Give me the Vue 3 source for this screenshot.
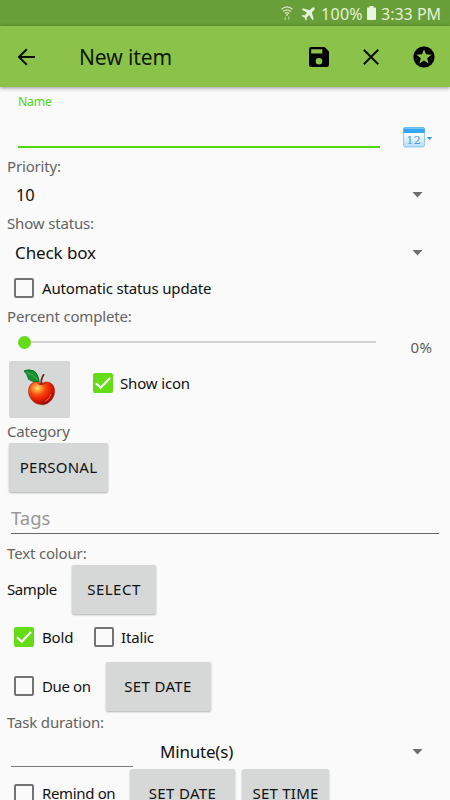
<script setup>
import { ref } from 'vue'

const autoUpdate = ref(false)
const showIcon = ref(true)
const bold = ref(true)
const italic = ref(false)
const dueOn = ref(false)
const remindOn = ref(false)
</script>

<template>
  <div class="screen">
    <div class="status">
      <svg class="wifi" width="12" height="15" viewBox="0 0 12 15" fill="none" stroke="#dcebc9" stroke-width="1.3">
        <path d="M.5 3.3Q6-1.5 11.500 3.300M2.200 5.500Q6 2.200 9.800 5.500M3.900 7.600Q6 5.800 8.100 7.600" />
        <circle cx="6" cy="9" r=".9" fill="#dcebc9" stroke="none" />
        <path d="M4.300 10.500V14M3 12.500L4.300 14M7.700 14V10.500L9 12" stroke-width=".9" opacity=".6" />
      </svg>
      <svg class="plane" width="14" height="14" viewBox="0 0 14 14" fill="#e6f1da">
        <path d="M13.400.6C12.700-.1 11.600.2 10.900.9L8.600 3.200 2 1.300.8 2.500 6 5.800 3.600 8.400 1.500 8.100.5 9.100 3.500 10.500 4.900 13.500 5.900 12.500 5.600 10.400 8.200 8 11.500 13.200 12.700 12 10.800 5.400 13.100 3.100C13.800 2.400 14.100 1.300 13.400.6Z" />
      </svg>
      <span class="pct">100%</span>
      <svg class="battery" width="9" height="14" viewBox="0 0 9 14" fill="#eaf4df">
        <path d="M2.500 0h4v1.500H8.300q.7 0 .7.7V13.300q0 .7-.7.7H.7q-.7 0-.7-.7V2.200q0-.7.7-.7H2.500z" />
      </svg>
      <span class="clock">3:33 PM</span>
    </div>

    <header class="bar">
      <svg class="back" width="18" height="18" viewBox="0 0 18 18" fill="none" stroke="#0b0f06" stroke-width="2">
        <path d="M18 9H2M9.800 1.200L2 9l7.800 7.800" />
      </svg>
      <h1 class="title">New item</h1>
      <svg class="save" width="20" height="20" viewBox="0 0 20 20">
        <path fill="#000" fill-rule="evenodd" d="M2.200 0H15.600L20 4.400V17.800Q20 20 17.800 20H2.200Q0 20 0 17.800V2.200Q0 0 2.200 0ZM2.200 2.300V6.600H13.300V2.300ZM10 11A3.300 3.300 0 1 0 10 17.600A3.300 3.300 0 1 0 10 11Z" />
      </svg>
      <svg class="close" width="16" height="16" viewBox="0 0 16 16" stroke="#0b0f06" stroke-width="2">
        <path d="M.8.8L15.200 15.200M15.200.8L.8 15.200" />
      </svg>
      <svg class="star" width="22" height="22" viewBox="0 0 22 22">
        <circle cx="11" cy="11" r="10.600" />
        <path fill="#8bc34a" d="M11 3.300L12.950 8.350 18.500 8.700 14.200 12.200 15.600 17.500 11 14.500 6.400 17.500 7.800 12.200 3.500 8.700 9.050 8.350Z" />
      </svg>
    </header>

    <main class="form">
      <div class="name-row">
        <div class="name-field"><span class="name-label">Name</span></div>
        <svg class="calendar" width="32" height="21" viewBox="0 0 32 21">
          <defs>
            <linearGradient id="sheet" x1="0" y1="0" x2="0" y2="1">
              <stop offset=".3" stop-color="#fff" />
              <stop offset="1" stop-color="#b9defa" />
            </linearGradient>
          </defs>
          <rect x=".6" y=".6" width="20.800" height="19.300" rx="1.500" fill="url(#sheet)" stroke="#8bc4ef" />
          <path d="M.3 6V2Q.3.300 2 .3H20Q21.700.3 21.700 2V6Z" fill="#36a7f3" />
          <path d="M1 1.200H21" stroke="#83cdfa" stroke-width="1.300" />
          <text x="10.500" y="16.800" text-anchor="middle" class="day">12</text>
          <path d="M23.700 10H29.300L26.500 13Z" fill="#2f9ad6" />
        </svg>
      </div>

      <div class="label priority">Priority:</div>
      <div class="select"><span class="ten">10</span><i class="caret"></i></div>
      <div class="label status-label">Show status:</div>
      <div class="select"><span>Check box</span><i class="caret"></i></div>

      <div class="row auto">
        <span class="check" :class="{ on: autoUpdate }"></span>
        <span class="text auto-text">Automatic status update</span>
      </div>

      <div class="label percent">Percent complete:</div>
      <div class="slider">
        <span class="thumb"></span><span class="track"></span><span class="value">0%</span>
      </div>

      <div class="icon-row">
        <div class="icon-button">
          <svg width="34" height="38" viewBox="0 0 34 38">
            <defs>
              <radialGradient id="skin" cx=".34" cy=".28" r=".74">
                <stop offset="0" stop-color="#fff08a" />
                <stop offset=".14" stop-color="#ffad42" />
                <stop offset=".4" stop-color="#fa4a0c" />
                <stop offset=".75" stop-color="#db1500" />
                <stop offset="1" stop-color="#8e0b00" />
              </radialGradient>
            </defs>
            <path d="M18.500 14.500C12 10 5.800 15 5.500 21.500C5.300 28 10 34.500 16.500 35.300C20 36.600 25.500 35 28.800 30.500C33 25 32.500 17 27.500 14C24.500 12.500 21.500 12.500 18.500 14.500Z" fill="url(#skin)" stroke="#a92a12" stroke-width=".6" />
            <path d="M14 14Q18.500 18 24 13.800Q18.500 15.500 14 14" fill="#991900" />
            <path d="M18.300 15.500Q17.800 9.500 21 5.300" fill="none" stroke="#682313" stroke-width="1.700" />
            <path d="M1 2Q5-.3 11 2Q15 4.500 16.200 12.600Q9 13.300 5.500 10.300Q4.500 5 1 2Z" fill="#159331" stroke="#075b20" stroke-width=".8" />
            <path d="M3.500 3.300Q10 5 15 11.500" fill="none" stroke="#6dbf5c" stroke-width=".7" />
            <path d="M28 25Q27 30 22 32.500" fill="none" stroke="#ff965e" stroke-width="1" opacity=".65" />
          </svg>
        </div>
        <div class="show-icon">
          <span class="check" :class="{ on: showIcon }">
            <svg v-if="showIcon" viewBox="0 0 20 20"><path d="M3 10.200L7.700 14.700 17 5" /></svg>
          </span>
          <span class="text icon-text">Show icon</span>
        </div>
      </div>

      <div class="label category">Category</div>
      <div class="row category-row"><button class="btn personal">PERSONAL</button></div>
      <div class="tags">Tags</div>
      <div class="label colour">Text colour:</div>
      <div class="row sample-row">
        <span class="text sample">Sample</span><button class="btn choose">SELECT</button>
      </div>
      <div class="row style-row">
        <span class="check" :class="{ on: bold }">
          <svg v-if="bold" viewBox="0 0 20 20"><path d="M3 10.200L7.700 14.700 17 5" /></svg>
        </span>
        <span class="text bold-text">Bold</span>
        <span class="check" :class="{ on: italic }"></span>
        <span class="text italic-text">Italic</span>
      </div>
      <div class="row due-row">
        <span class="check" :class="{ on: dueOn }"></span>
        <span class="text due-text">Due on</span>
        <button class="btn date">SET DATE</button>
      </div>
      <div class="label task">Task duration:</div>
      <div class="duration">
        <span class="amount"></span>
        <div class="select unit"><span>Minute(s)</span><i class="caret"></i></div>
      </div>
      <div class="row remind-row">
        <span class="check" :class="{ on: remindOn }"></span>
        <span class="text remind-text">Remind on</span>
        <button class="btn date">SET DATE</button>
        <button class="btn time">SET TIME</button>
      </div>
    </main>
  </div>
</template>

<style>
body {
  overflow: hidden;
}
</style>

<style scoped>
* {
  box-sizing: border-box;
}
.screen {
  width: 450px;
  height: 800px;
  overflow: hidden;
  background: #fafafa;
  font-family: 'Noto Sans', sans-serif;
  font-size: 15px;
  color: #111;
  white-space: nowrap;
}
.status {
  height: 26px;
  background: #689f38;
  display: flex;
  align-items: center;
  padding-left: 281px;
  color: #e4f0d8;
  font-size: 16px;
  line-height: 26px;
}
.plane {
  margin: 1px 0 0 8px;
}
.pct {
  width: 46px;
  margin-left: 6px;
  padding-top: 1px;
  letter-spacing: 0.3px;
}
.clock {
  margin-left: 5px;
  padding-top: 1px;
}
.bar {
  position: relative;
  height: 61px;
  background: #8bc34a;
  display: flex;
  align-items: center;
  padding-left: 17px;
  box-shadow: 0 1px 4px rgba(0, 0, 0, 0.42);
}
.title {
  margin: 0 0 0 44px;
  width: 230px;
  padding-top: 1px;
  font-size: 21px;
  font-weight: 400;
  letter-spacing: -0.1px;
  color: #101a06;
}
.close {
  margin-left: 34px;
}
.star {
  margin-left: 34px;
}
.form {
  display: flex;
  flex-direction: column;
}
.name-row {
  height: 69px;
  display: flex;
  padding-left: 18px;
}
.name-field {
  width: 362px;
  height: 61px;
  border-bottom: 2px solid #4cda0a;
  padding-top: 5px;
}
.name-label {
  display: block;
  font-size: 12.2px;
  line-height: 19px;
  letter-spacing: -0.2px;
  color: #4fd513;
}
.calendar {
  margin: 40px 0 0 23px;
}
.day {
  font: 11.5px 'DejaVu Serif', serif;
  fill: #4a9cdd;
}
.label {
  flex: none;
  display: flex;
  align-items: center;
  padding: 0 0 1px 7px;
  color: #636363;
  letter-spacing: -0.16px;
}
.priority {
  height: 20px;
}
.status-label {
  height: 21px;
}
.percent {
  height: 22px;
}
.category {
  height: 18px;
}
.colour {
  height: 24px;
}
.task {
  height: 21px;
}
.select {
  height: 37px;
  display: flex;
  align-items: center;
  justify-content: space-between;
  padding: 0 27px 0 15px;
  font-size: 17px;
  letter-spacing: -0.1px;
}
.ten {
  padding-left: 1px;
  font-size: 16.5px;
}
.caret {
  width: 11px;
  height: 6px;
  background: #6e6e6e;
  clip-path: polygon(0 0, 100% 0, 50% 100%);
}
.row {
  flex: none;
  display: flex;
  align-items: center;
  padding-left: 14px;
}
.check {
  flex: none;
  width: 20px;
  height: 20px;
  border: 2px solid #737373;
  border-radius: 2px;
}
.check.on {
  background: #64dd17;
  border: 0;
}
.check svg {
  display: block;
  width: 20px;
  height: 20px;
  fill: none;
  stroke: #fff;
  stroke-width: 2.2;
}
.text {
  margin-left: 8px;
  padding-bottom: 1px;
  letter-spacing: -0.16px;
}
.auto {
  height: 34px;
}
.slider {
  height: 30px;
  display: flex;
  align-items: center;
  padding-left: 18px;
}
.thumb {
  width: 13px;
  height: 13px;
  border-radius: 50%;
  background: #64dd17;
}
.track {
  width: 345px;
  height: 2px;
  background: #d2d2d2;
}
.value {
  margin: 10px 0 0 34.5px;
  font-size: 15px;
  letter-spacing: 0.4px;
  color: #5c5c5c;
}
.icon-row {
  height: 65px;
  display: flex;
  padding: 4px 0 0 9px;
}
.icon-button {
  width: 61px;
  height: 57px;
  padding: 8px 0 0 14px;
  background: #d6d7d7;
  border-radius: 2px;
}
.show-icon {
  height: 44px;
  margin-left: 23px;
  display: flex;
  align-items: center;
}
.icon-text {
  margin-left: 7px;
}
.btn {
  flex: none;
  height: 49px;
  padding: 0 0 1px;
  border: 0;
  border-radius: 2px;
  background: #d6d7d7;
  box-shadow: 0 1px 2px rgba(0, 0, 0, 0.3);
  font: inherit;
  letter-spacing: 0.25px;
  color: #111;
}
.category-row {
  height: 55px;
  padding-left: 9px;
}
.personal {
  width: 99px;
}
.tags {
  height: 39px;
  margin: 0 11px 7px;
  padding-top: 4px;
  border-bottom: 1px solid #666;
  font-size: 18.5px;
  line-height: 37px;
  letter-spacing: 0;
  color: #999;
}
.sample-row {
  height: 49px;
  margin-bottom: 1px;
  padding-left: 7px;
}
.sample {
  width: 65px;
  margin: 0;
  letter-spacing: -0.4px;
}
.choose {
  width: 84px;
  letter-spacing: 0.5px;
}
.style-row {
  height: 44px;
  margin-bottom: 1px;
}
.bold-text {
  width: 52px;
}
.italic-text {
  margin-left: 7px;
}
.due-row {
  height: 52px;
}
.due-text {
  width: 63.5px;
  letter-spacing: -0.4px;
}
.date {
  width: 105px;
  letter-spacing: 0.35px;
}
.duration {
  height: 36px;
  display: flex;
}
.amount {
  width: 122px;
  height: 34px;
  margin-left: 11px;
  border-bottom: 1px solid #777;
}
.unit {
  width: 317px;
  padding-left: 27px;
  letter-spacing: -0.2px;
}
.remind-row {
  height: 49px;
}
.remind-text {
  width: 88px;
  letter-spacing: -0.35px;
}
.time {
  width: 87px;
  margin-left: 7px;
}
</style>
